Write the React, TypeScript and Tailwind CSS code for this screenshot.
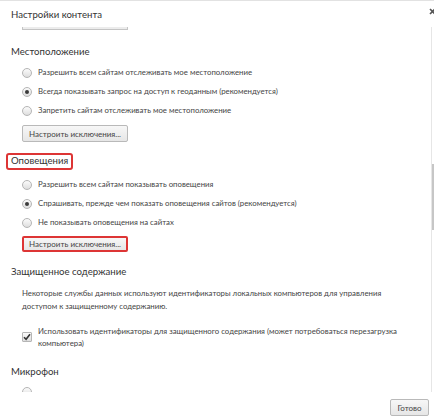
import React from "react";

const Radio = ({ checked = false }: { checked?: boolean }) => (
  <span className="w-[10px] h-[10px] rounded-full border border-[#b5b5b5] bg-gradient-to-b from-[#fbfbfb] to-[#dedede] flex items-center justify-center shrink-0">
    {checked && <span className="w-[4px] h-[4px] rounded-full bg-[#3a3a3a]" />}
  </span>
);

const RadioRow = ({ label, checked = false }: { label: string; checked?: boolean }) => (
  <div className="h-[19px] flex items-center pl-[22px] gap-[6px]">
    <Radio checked={checked} />
    <span className="text-[7.8px] text-[#444] whitespace-nowrap">{label}</span>
  </div>
);

const ExButton = ({ red = false }: { red?: boolean }) => (
  <div className="pl-[22px]">
    <div
      className={
        red
          ? "w-[106px] h-[16px] rounded-[2px] border-2 border-[#dd3535] bg-gradient-to-b from-[#f7f7f7] to-[#e6e6e6] flex items-center justify-center text-[8px] text-[#444] whitespace-nowrap"
          : "w-[106px] h-[17px] rounded-[2px] border border-[#b9b9b9] bg-gradient-to-b from-[#f7f7f7] to-[#e6e6e6] flex items-center justify-center text-[8px] text-[#444] whitespace-nowrap"
      }
    >
      Настроить исключения...
    </div>
  </div>
);

export default function App() {
  return (
    <div
      className="w-[434px] h-[420px] bg-white relative overflow-hidden border-t border-[#e2e2e2] flex flex-col"
      style={{ fontFamily: 'Lato, "Open Sans", sans-serif' }}
    >
      {/* header */}
      <div className="h-[26px] shrink-0 pl-[11px] pt-[7px]">
        <div className="text-[9.6px] leading-[14px] text-[#333]">Настройки контента</div>
      </div>
      <svg className="absolute left-[429px] top-[7px]" width="7" height="7" viewBox="0 0 7 7">
        <path d="M1 1L6 6M6 1L1 6" stroke="#555" strokeWidth="1.6" />
      </svg>

      {/* scroll area */}
      <div className="h-[365px] shrink-0 flex overflow-hidden">
        <div className="w-[431px] flex flex-col">
          <div className="ml-[22px] w-[106px] h-[3px] shrink-0 border-x border-b border-[#c4c4c4] bg-[#ececec]" />

          <div className="mt-[14px] pl-[11px] text-[9.6px] leading-[16px] h-[16px] text-[#333]">Местоположение</div>
          <div className="mt-[3px]">
            <RadioRow label="Разрешить всем сайтам отслеживать мое местоположение" />
            <RadioRow label="Всегда показывать запрос на доступ к геоданным (рекомендуется)" checked />
            <RadioRow label="Запретить сайтам отслеживать мое местоположение" />
          </div>
          <div className="mt-[5px]">
            <ExButton />
          </div>

          <div className="mt-[11px] pl-[6px] flex">
            <div className="h-[17px] border-2 border-[#dd3535] rounded-[3px] px-[3px] flex items-center text-[9.6px] text-[#333]">
              Оповещения
            </div>
          </div>
          <div className="mt-[5px]">
            <RadioRow label="Разрешить всем сайтам показывать оповещения" />
            <RadioRow label="Спрашивать, прежде чем показать оповещения сайтов (рекомендуется)" checked />
            <RadioRow label="Не показывать оповещения на сайтах" />
          </div>
          <div className="mt-[4px]">
            <ExButton red />
          </div>

          <div className="mt-[12px] pl-[11px] text-[9.6px] leading-[16px] h-[16px] text-[#333]">Защищенное содержание</div>
          <div className="mt-[7px] pl-[22px] text-[7.8px] leading-[13px] text-[#444] whitespace-nowrap">
            Некоторые службы данных используют идентификаторы локальных компьютеров для управления
            <br />
            доступом к защищенному содержанию.
          </div>
          <div className="mt-[12px] pl-[22px] flex items-center gap-[6px]">
            <span className="w-[10px] h-[10px] border border-[#b5b5b5] rounded-[1px] bg-gradient-to-b from-[#fbfbfb] to-[#dedede] flex items-center justify-center shrink-0">
              <svg width="8" height="8" viewBox="0 0 8 8">
                <path d="M1 4.2L3.1 6.3L7 1.3" stroke="#333" strokeWidth="1.6" fill="none" />
              </svg>
            </span>
            <div className="text-[7.8px] leading-[12px] text-[#444] whitespace-nowrap">
              Использовать идентификаторы для защищенного содержания (может потребоваться перезагрузка
              <br />
              компьютера)
            </div>
          </div>

          <div className="mt-[15px] pl-[11px] text-[9.6px] leading-[16px] h-[16px] text-[#333]">Микрофон</div>
          <div className="mt-[7px] pl-[22px]">
            <Radio />
          </div>
        </div>
        <div className="w-[3px] border-l border-[#e6e6e6] flex flex-col">
          <div className="mt-[137px] h-[66px] bg-[#c6c6c6]" />
        </div>
      </div>

      {/* footer */}
      <div className="flex-1 flex justify-end items-start pt-[7px] pr-[5px]">
        <div className="w-[39px] h-[17px] rounded-[2px] border border-[#b9b9b9] bg-gradient-to-b from-[#f7f7f7] to-[#e6e6e6] flex items-center justify-center text-[8px] text-[#444]">
          Готово
        </div>
      </div>
    </div>
  );
}
